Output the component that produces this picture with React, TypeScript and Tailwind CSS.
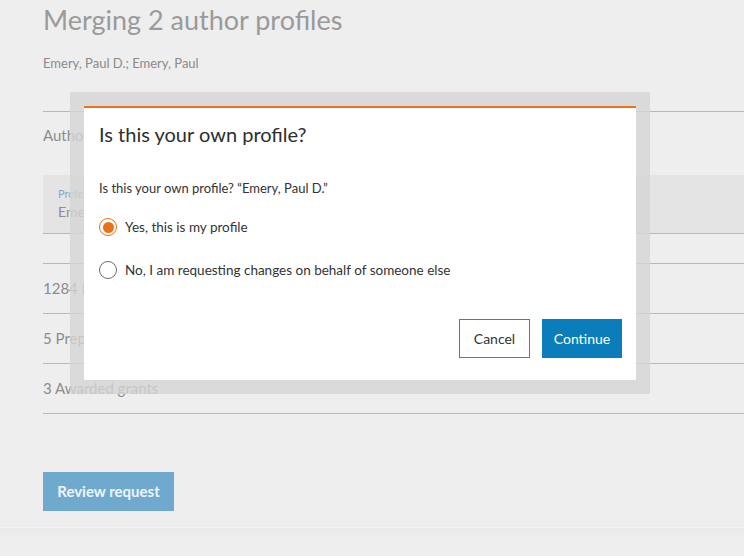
import React from 'react';

const font = { fontFamily: 'Lato, "Noto Sans", sans-serif' };

const Row = ({ children }: { children?: React.ReactNode }) => (
  <div className="h-[50px] flex items-center border-b border-[#b8b8b8] text-[15px] text-[#8c8c8c]">{children}</div>
);

const Radio = ({ checked, label }: { checked?: boolean; label: string }) => (
  <label className="flex items-center gap-[8px] text-[13.5px] text-[#333]">
    {checked ? (
      <span className="w-[18px] h-[18px] rounded-full border border-[#e9711c] flex items-center justify-center bg-white">
        <span className="w-[11px] h-[11px] rounded-full bg-[#e9711c]" />
      </span>
    ) : (
      <span className="w-[18px] h-[18px] rounded-full border-[1.5px] border-[#6b6b6b] bg-white" />
    )}
    <span>{label}</span>
  </label>
);

export default function App() {
  return (
    <div className="relative w-[744px] h-[556px] bg-[#eeeeee] overflow-hidden" style={font}>
      <div className="pl-[43px]">
        <h1 className="h-[40px] leading-[40px] text-[27px] text-[#9a9a9a] font-normal">Merging 2 author profiles</h1>
        <p className="mt-[13px] text-[13px] leading-[20px] text-[#8a8a8a]">Emery, Paul D.; Emery, Paul</p>
        <div className="mt-[38px] border-t border-[#b8b8b8]" />
        <div className="h-[46px] flex items-center text-[15px] text-[#8c8c8c]">Authors</div>
        <div className="mt-[17px] h-[59px] bg-[#e4e4e4] pl-[15px] flex flex-col justify-center border-b border-[#b8b8b8]">
          <span className="text-[11px] leading-[16px] text-[#86a9c4]">Preferred name</span>
          <span className="text-[14px] leading-[20px] text-[#8c8c8c]">Emery, Paul D.</span>
        </div>
        <div className="h-[30px] border-b border-[#b8b8b8]" />
        <Row>1284 Documents</Row>
        <Row>5 Preprints</Row>
        <Row>3 Awarded grants</Row>
        <button className="mt-[58px] w-[131px] h-[39px] bg-[#70a9ce] text-[#eef5fa] text-[15px] font-bold">Review request</button>
      </div>
      <div className="absolute left-0 right-0 top-[527px] border-t border-[#f3f3f3] h-[8px] bg-[#ebebeb]" />

      <div className="absolute left-[70px] top-[92px] w-[580px] h-[302px] p-[14px] bg-[#d4d4d4]/80">
        <div className="h-full bg-white border-t-2 border-[#e9711c] pl-[15px] pr-[14px] flex flex-col">
          <h2 className="mt-[12px] text-[20px] leading-[28px] text-[#2e2e2e] font-normal">Is this your own profile?</h2>
          <p className="mt-[31px] text-[13px] leading-[18px] text-[#333]">Is this your own profile? “Emery, Paul D.”</p>
          <div className="mt-[20px] flex flex-col gap-[23px]">
            <Radio checked label="Yes, this is my profile" />
            <Radio label="No, I am requesting changes on behalf of someone else" />
          </div>
          <div className="mt-[38px] flex justify-end gap-[12px]">
            <button className="w-[71px] h-[39px] border border-[#737373] text-[14px] text-[#333] bg-white">Cancel</button>
            <button className="w-[80px] h-[39px] bg-[#0c7dbb] text-[14px] text-white">Continue</button>
          </div>
        </div>
      </div>
    </div>
  );
}
